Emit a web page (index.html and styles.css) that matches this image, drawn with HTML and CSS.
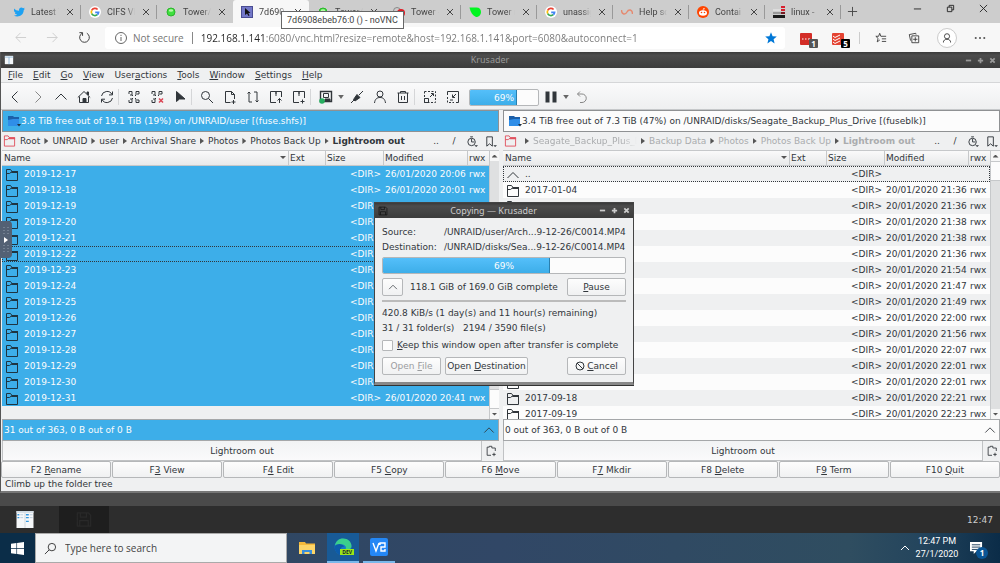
FILE: index.html
```html
<!DOCTYPE html>
<html lang="en">
<head>
    <meta charset="UTF-8">
    <meta name="viewport" content="width=device-width, initial-scale=1.0">
    <title>7d6908ebeb76:0 () - noVNC</title>
    <link rel="stylesheet" href="styles.css">
</head>
<body>

<!-- Shared icons -->
<svg class="sprite" aria-hidden="true">
    <symbol id="i-x" viewBox="0 0 10 10"><path d="M2 2l6 6M8 2l-6 6"/></symbol>
    <symbol id="i-google" viewBox="0 0 12 12"><circle cx="6" cy="6" r="6" fill="#fff" stroke="none"/><g fill="none" stroke-width="1.7"><path stroke="#ea4335" d="M2.7 4.4A3.6 3.6 0 0 1 8.6 3.5"/><path stroke="#fbbc05" d="M2.7 4.4a3.6 3.6 0 0 0 0 3.2"/><path stroke="#34a853" d="M2.7 7.6a3.6 3.6 0 0 0 5.6 1.1"/><path stroke="#4285f4" d="M8.3 8.7A3.6 3.6 0 0 0 9.6 6.3H6.2"/></g></symbol>
    <symbol id="i-green" viewBox="0 0 12 12"><circle cx="6" cy="6" r="4" fill="#3fe03f" stroke="#2bb52b"/><ellipse cx="6" cy="4.5" rx="2.2" ry="1.2" fill="#b5f7a5" stroke="none"/></symbol>
    <symbol id="i-folder" viewBox="0 0 14 12"><path d="M1.500 11.500V.5H5.500L7 2.500h5.500v9z" fill="none"/><path d="M1.500 4.500h3L7 2.500" fill="none"/><path d="M7 2h6v2H6z" fill="currentColor" stroke="none"/></symbol>
    <symbol id="i-disk" viewBox="0 0 14 12"><path d="M1 1h5l1 1h5v4H1z" fill="#1c5fa8" stroke="none"/><path d="M1 5l5-1h6v7H1z" fill="#2f8ee8" stroke="none"/><path d="M10 9h4l-2 2.500z" fill="#234" stroke="none"/></symbol>
    <symbol id="i-up" viewBox="0 0 14 12"><path d="M1.500 9L7 3.500 12.500 9" fill="none"/></symbol>
    <symbol id="i-clock" viewBox="0 0 14 14"><circle cx="6" cy="7.500" r="4"/><path d="M6 7.500V4M6 7.500h3M4.500 2h3"/><path d="M9 11h4l-2 2z" fill="currentColor" stroke="none"/></symbol>
    <symbol id="i-mark" viewBox="0 0 14 14"><path d="M3 2h6v10L6 9.500 3 12z"/><path d="M10 11h4l-2 2z" fill="currentColor" stroke="none"/></symbol>
    <symbol id="i-newtab" viewBox="0 0 14 14"><path d="M7 12H2.500V2.500H5V1.500h3v2h4V7M8.500 11h4M10.500 9v4"/></symbol>
    <symbol id="i-save" viewBox="0 0 14 14"><path d="M1.500 1.500h9l2 2v9h-11zM4 1.500V5h5V1.500M3.500 12.500V8h7v4.500"/></symbol>
</svg>

<!-- Browser tabs -->
<header class="tab-strip">
    <nav class="tabs">
        <a class="tab" href="#"><svg class="fav" viewBox="0 0 12 12"><path d="M1 2.500C2.500 4 4 4.700 6 4.700 5.700 2 8.500.700 10 2.300l1.700-.5-.8 1.500.9-.1-1.100 1.100C10.700 9.500 5 12 .8 9.500c1.500 0 2.500-.3 3.300-1C2.800 8.300 2 7.700 1.800 6.700h1C1.500 6.200 1 5.400 1 4.300z" fill="#1da1f2"/></svg><span>Latest T</span><svg class="close"><use href="#i-x"/></svg></a>
        <a class="tab" href="#"><svg class="fav"><use href="#i-google"/></svg><span>CIFS VF</span><svg class="close"><use href="#i-x"/></svg></a>
        <a class="tab plain" href="#"><svg class="fav"><use href="#i-green"/></svg><span>Tower/</span><svg class="close"><use href="#i-x"/></svg></a>
        <a class="tab active" href="#"><svg class="fav" viewBox="0 0 12 12"><rect x=".5" y=".5" width="11" height="11" fill="#7378c8" stroke="#4a4d93"/><path d="M4 2v7l2-1.500L7.500 10l1-.6L7.300 7H9.500z" fill="#111"/></svg><span>7d690</span><svg class="close"><use href="#i-x"/></svg></a>
        <a class="tab plain" href="#"><svg class="fav"><use href="#i-green"/></svg><span>Tower/</span><svg class="close"><use href="#i-x"/></svg></a>
        <a class="tab" href="#"><svg class="fav" viewBox="0 0 12 12"><circle cx="4" cy="5" r="3.500" fill="none" stroke="#888"/><circle cx="8" cy="7" r="4" fill="#e01b24"/><path d="M8 5v4" stroke="#fff"/></svg><span>Tower -</span><svg class="close"><use href="#i-x"/></svg></a>
        <a class="tab" href="#"><svg class="fav" viewBox="0 0 12 12"><path d="M.5 1.500h7c3 0 4.500 2 4.500 4.500 0 3-2.500 5-5 5C3.500 9.500 1.500 6 .5 1.500z" fill="#00f520"/></svg><span>Tower n</span><svg class="close"><use href="#i-x"/></svg></a>
        <a class="tab" href="#"><svg class="fav"><use href="#i-google"/></svg><span>unassig</span><svg class="close"><use href="#i-x"/></svg></a>
        <a class="tab" href="#"><svg class="fav" viewBox="0 0 12 12"><path d="M.5 4c0 5 4 5 5.500 2s5.500-3 5.500 2" fill="none" stroke="#e58a70" stroke-width="1.400"/></svg><span>Help sc</span><svg class="close"><use href="#i-x"/></svg></a>
        <a class="tab" href="#"><svg class="fav" viewBox="0 0 12 12"><circle cx="6" cy="6" r="6" fill="#ff4500"/><ellipse cx="6" cy="7" rx="4" ry="2.700" fill="#fff"/><circle cx="4.500" cy="6.500" r=".8" fill="#ff4500"/><circle cx="7.500" cy="6.500" r=".8" fill="#ff4500"/><path d="M6 4.500l.5-2 1.500.4" fill="none" stroke="#fff" stroke-width=".7"/></svg><span>Contai</span><svg class="close"><use href="#i-x"/></svg></a>
        <a class="tab" href="#"><svg class="fav" viewBox="0 0 12 12"><path d="M0 3h8v2H0z" fill="#ddd"/><path d="M0 6h8v2H0z" fill="#999"/><path d="M0 9h12v3H0z" fill="#1a1a1a"/><path d="M8 0h4v2H8zM8 3h4v2H8z" fill="#d8202f"/><path d="M8 6h4v2H8z" fill="#7a1a22"/></svg><span>linux -</span><svg class="close"><use href="#i-x"/></svg></a>
        <button class="new-tab" aria-label="New tab"><svg viewBox="0 0 12 12"><path d="M6 1v10M1 6h10"/></svg></button>
    </nav>
    <div class="window-buttons">
        <button aria-label="Minimize"><svg viewBox="0 0 10 10"><path d="M1 5.500h8"/></svg></button>
        <button aria-label="Restore"><svg viewBox="0 0 10 10"><path d="M1.500 3.500h5v5h-5zM3.500 3.500v-2h5v5h-2"/></svg></button>
        <button aria-label="Close"><svg viewBox="0 0 10 10"><path d="M1 1l8 8M9 1L1 9"/></svg></button>
    </div>
    <div class="tooltip">7d6908ebeb76:0 () - noVNC</div>
</header>

<!-- Address bar -->
<div class="address-row">
    <button class="nav-btn off" aria-label="Back"><svg viewBox="0 0 14 14"><path d="M13 7H2M7 2L2 7l5 5"/></svg></button>
    <button class="nav-btn off" aria-label="Forward"><svg viewBox="0 0 14 14"><path d="M1 7h11M7 2l5 5-5 5"/></svg></button>
    <button class="nav-btn" aria-label="Reload"><svg viewBox="0 0 14 14"><path d="M4.500 2.400A5.200 5.200 0 1 0 9.500 2.400M1.500 1.800h3.400v3.400"/></svg></button>
    <label class="address">
        <svg class="info" viewBox="0 0 12 12"><circle cx="6" cy="6" r="5.500"/><path d="M6 5v4M6 2.800v1.200"/></svg>
        <span class="secure">Not secure</span>
        <input type="text" value="192.168.1.141:6080/vnc.html?resize=remote&amp;host=192.168.1.141&amp;port=6080&amp;autoconnect=1">
        <svg class="star" viewBox="0 0 12 12"><path d="M6 .3l1.600 3.900 4.200.3-3.200 2.700 1 4.200L6 9.100l-3.600 2.300 1-4.200L.2 4.500l4.200-.3z"/></svg>
    </label>
    <div class="extensions">
        <button class="ext" aria-label="Passwords"><svg viewBox="0 0 12 12"><rect width="12" height="12" rx="1" fill="#d32d27"/><path d="M2 6h1.500M5 6h1.500M8 6h2" stroke="#fff"/></svg><b>1</b></button>
        <button class="ext" aria-label="Tasks"><svg viewBox="0 0 12 12"><rect width="12" height="12" rx="1" fill="#e44332"/><path d="M1 3l2 1.500L8 2M1 6l2 1.500L8 5M1 9l2 1.500L8 8" stroke="#fff" fill="none"/></svg><b class="black">5</b></button>
        <i></i>
        <button class="tool" aria-label="Favorites"><svg viewBox="0 0 14 14"><path d="M13 5H6.800L5.500 1.500 4.200 5H1l2.600 2.500-1 4 3-2.200M8 8h5M8 11h5"/></svg></button>
        <button class="tool" aria-label="Collections"><svg viewBox="0 0 14 14"><path d="M4.500 4.500h8v8h-8zM8.500 6v5M6 8.500h5M3 10L1.500 3l7.500-1.500.4 1.500"/></svg></button>
        <button class="tool avatar" aria-label="Profile"><svg viewBox="0 0 14 14"><circle cx="7" cy="5" r="3"/><path d="M2.500 12.500c.5-3 2-4 4.500-4s4 1 4.500 4"/></svg></button>
        <button class="tool" aria-label="More"><svg viewBox="0 0 14 14"><path d="M1 7h2M6 7h2M11 7h2" stroke-width="1.600"/></svg></button>
    </div>
</div>

<!-- Remote desktop -->
<main class="remote">
    <div class="title-bar">
        <svg class="app-icon" viewBox="0 0 12 12"><path d="M1 1h10v10H1z" fill="#f4f7fa"/><path d="M1 2.500h10M6 2.500V11" stroke="#8fb7d8"/></svg>
        <span>Krusader</span>
        <div class="title-btns"><button aria-label="Minimize"><svg viewBox="0 0 8 8"><path d="M1 4h6"/></svg></button><button aria-label="Maximize"><svg viewBox="0 0 8 8"><path d="M1 4h6M4 1v6"/></svg></button><button aria-label="Close"><svg viewBox="0 0 8 8"><path d="M1.500 1.500l5 5M6.500 1.500l-5 5"/></svg></button></div>
    </div>

    <nav class="menu-bar">
        <a href="#"><u>F</u>ile</a><a href="#"><u>E</u>dit</a><a href="#"><u>G</u>o</a><a href="#"><u>V</u>iew</a><a href="#">User<u>a</u>ctions</a><a href="#"><u>T</u>ools</a><a href="#"><u>W</u>indow</a><a href="#"><u>S</u>ettings</a><a href="#"><u>H</u>elp</a>
    </nav>

    <div class="tool-bar">
        <button aria-label="Back"><svg viewBox="0 0 14 14"><path d="M9.500 1.500L4 7l5.500 5.500"/></svg></button>
        <button class="dim" aria-label="Forward"><svg viewBox="0 0 14 14"><path d="M4.500 1.500L10 7l-5.500 5.500"/></svg></button>
        <button aria-label="Up"><svg viewBox="0 0 14 14"><path d="M1.500 9.500L7 4l5.500 5.500"/></svg></button>
        <button aria-label="Home"><svg viewBox="0 0 14 14"><path d="M.8 7.500L7 1.500l6.200 6M2.500 6.500v6h9v-6"/><path d="M6 8.500h3v4H6zM10 2h1.500v3L10 4z" fill="currentColor"/></svg></button>
        <button aria-label="Refresh"><svg viewBox="0 0 14 14"><path d="M1.500 6A5.600 5.600 0 0 1 12 4.500M12.500 8A5.600 5.600 0 0 1 2 9.500M12.500 1.500v3.400H9M1.500 12.500V9.200H5"/></svg></button>
        <i></i>
        <button aria-label="Select"><svg viewBox="0 0 14 14"><path d="M2 4V1.500h3V5H3M9 5V1.500h3V4h-2M2 10v2.500h3V9H3M9 9v3.500h3V10h-2M5 5l1 1M9 5L8 6M5 9l1-1M9 9L8 8"/></svg></button>
        <button aria-label="Unselect"><svg viewBox="0 0 14 14"><path d="M2 4V1.500h3V5H3M9 5V1.500h3V4h-2M2 10v2.500h3V9H3M5 5l1 1M9 5L8 6M5 9l1-1"/><path d="M9 8.500l4 4M13 8.500l-4 4" stroke="#da4453" stroke-width="1.500"/></svg></button>
        <button aria-label="Pointer"><svg viewBox="0 0 14 14"><path d="M3.500 1.500v10l3-2.500 5.500 0z" fill="currentColor"/></svg></button>
        <i></i>
        <button aria-label="Search"><svg viewBox="0 0 14 14"><circle cx="5.500" cy="5.500" r="4"/><path d="M8.500 8.500l4.500 4.500"/></svg></button>
        <button aria-label="New file"><svg viewBox="0 0 14 14"><path d="M7.500 12.500h-5v-11h6l3 3V9M8.500 1.500v3h3M8.500 12h4M10.500 10v4"/></svg></button>
        <button aria-label="Synchronize"><svg viewBox="0 0 14 14"><path d="M6 12H3V2M1.500 3.500L3 2l1.500 1.500M8 2h3v9M9.500 10.500L11 12l1.500-1.500"/></svg></button>
        <button aria-label="Unpack"><svg viewBox="0 0 14 14"><path d="M7 12.500H1.500v-11h11V7M7 1.500V6M6 3h2M10.500 13V8.500M8.500 10.500l2-2 2 2"/></svg></button>
        <button aria-label="Pack"><svg viewBox="0 0 14 14"><path d="M7 12.500H1.500v-11h11V8M7 1.500V6M6 3h2M8.500 11.500h4M10.500 9.500v4"/></svg></button>
        <i></i>
        <button aria-label="Disk"><svg viewBox="0 0 14 14"><path d="M1.500 1.500h11v10h-11z" stroke-width="1.400"/><path d="M4.500 3.500h5v4h-5z"/><path d="M6 9h5v2H6z" fill="currentColor"/><circle cx="3" cy="11" r="2.800" fill="#27ae60" stroke="none"/></svg></button>
        <button class="drop" aria-label="Disk menu"></button>
        <button aria-label="Connect"><svg viewBox="0 0 14 14"><path d="M1 13l4-4M9 5l4-4"/><path d="M3.500 9.500L7 4.500l3 3L5 11z" fill="currentColor"/></svg></button>
        <button aria-label="User"><svg viewBox="0 0 14 14"><circle cx="7" cy="4" r="3"/><path d="M1.500 13c.5-4 2.500-5.500 5.500-5.500s5 1.500 5.500 5.500"/></svg></button>
        <button aria-label="Trash"><svg viewBox="0 0 14 14"><path d="M1.500 3h11M4.500 3V1.500h5V3M2.500 3v9.500h9V3M5.500 6v4M8.500 6v4"/></svg></button>
        <i></i>
        <button aria-label="Expand"><svg viewBox="0 0 14 14"><path d="M1.500 1.500h11v11h-11z" stroke-dasharray="2 1.500"/><path d="M1.500 8.500h4v4h-4zM7 7l3-3M8 3.500h2.500V6"/></svg></button>
        <button aria-label="Shrink"><svg viewBox="0 0 14 14"><path d="M1.500 5V1.500h11v11H10"/><path d="M1.500 7v5.500H8" stroke-dasharray="2 1.500"/><path d="M10 4L7 7M6.500 4.500v3H9M4 10h3"/></svg></button>
        <div class="progress small" role="progressbar" aria-valuenow="69"><div style="width:69%"></div><span>69%</span></div>
        <button aria-label="Pause"><svg viewBox="0 0 14 14"><path d="M1.500 1.500h4v11h-4zM8.500 1.500h4v11h-4z" fill="currentColor" stroke="none"/></svg></button>
        <button class="drop" aria-label="Queue menu"></button>
        <button class="dim" aria-label="Undo"><svg viewBox="0 0 14 14"><path d="M5 1.500L2.500 4 5 6.500M2.500 4H7a4 4 0 0 1 0 8.500H5"/></svg></button>
    </div>

    <div class="panels">
        <section class="panel left">
            <div class="media"><svg><use href="#i-disk"/></svg>3.8 TiB free out of 19.1 TiB (19%) on /UNRAID/user [(fuse.shfs)]</div>
            <nav class="crumbs">
                <svg class="red"><use href="#i-folder"/></svg>
                <a href="#">Root</a><s></s><a href="#">UNRAID</a><s></s><a href="#">user</a><s></s><a href="#">Archival Share</a><s></s><a href="#">Photos</a><s></s><a href="#">Photos Back Up</a><s></s><a class="here" href="#">Lightroom out</a>
                <div class="jump"><button>..</button><button>/</button><button aria-label="History"><svg><use href="#i-clock"/></svg></button><button aria-label="Bookmarks"><svg><use href="#i-mark"/></svg></button></div>
            </nav>
            <div class="list">
                <div class="files">
                    <table>
                        <colgroup><col><col class="c-ext"><col class="c-size"><col class="c-mod"><col class="c-rwx"></colgroup>
                        <thead><tr><th class="sorted">Name</th><th>Ext</th><th>Size</th><th>Modified</th><th>rwx</th></tr></thead>
                        <tbody id="left-rows"></tbody>
                    </table>
                </div>
                <div class="scroll end"><button aria-label="Scroll up"></button><div><span></span></div><button class="down" aria-label="Scroll down"></button></div>
            </div>
            <div class="totals">31 out of 363, 0 B out of 0 B<svg><use href="#i-up"/></svg></div>
            <div class="panel-tabs"><button class="ptab">Lightroom out</button><button class="add" aria-label="New tab"><svg><use href="#i-newtab"/></svg></button></div>
        </section>

        <section class="panel right">
            <div class="media"><svg><use href="#i-disk"/></svg>3.4 TiB free out of 7.3 TiB (47%) on /UNRAID/disks/Seagate_Backup_Plus_Drive [(fuseblk)]</div>
            <nav class="crumbs">
                <svg class="red"><use href="#i-folder"/></svg>
                <s></s><a class="cut" href="#">Seagate_Backup_Plus_D</a><s></s><a href="#">Backup Data</a><s></s><a href="#">Photos</a><s></s><a href="#">Photos Back Up</a><s></s><a class="here" href="#">Lightroom out</a>
                <div class="jump"><button>..</button><button>/</button><button aria-label="History"><svg><use href="#i-clock"/></svg></button><button aria-label="Bookmarks"><svg><use href="#i-mark"/></svg></button></div>
            </nav>
            <div class="list">
                <div class="files">
                    <table>
                        <colgroup><col><col class="c-ext"><col class="c-size"><col class="c-mod"><col class="c-rwx"></colgroup>
                        <thead><tr><th class="sorted">Name</th><th>Ext</th><th>Size</th><th>Modified</th><th>rwx</th></tr></thead>
                        <tbody id="right-rows"></tbody>
                    </table>
                </div>
                <div class="scroll"><button aria-label="Scroll up"></button><div><span></span></div><button class="down" aria-label="Scroll down"></button></div>
            </div>
            <div class="totals">0 out of 363, 0 B out of 0 B<svg><use href="#i-up"/></svg></div>
            <div class="panel-tabs"><button class="ptab">Lightroom out</button><button class="add" aria-label="New tab"><svg><use href="#i-newtab"/></svg></button></div>
        </section>
    </div>

    <div class="fkeys">
        <button>F2 <u>R</u>ename</button><button>F<u>3</u> View</button><button>F<u>4</u> Edit</button><button>F5 <u>C</u>opy</button><button>F6 <u>M</u>ove</button><button>F<u>7</u> Mkdir</button><button>F8 <u>D</u>elete</button><button>F<u>9</u> Term</button><button>F10 <u>Q</u>uit</button>
    </div>
    <div class="status">Climb up the folder tree</div>

    <!-- Copy dialog -->
    <div class="dialog" role="dialog" aria-label="Copying">
        <div class="title-bar">
            <svg class="app-icon dark"><use href="#i-save"/></svg>
            <span>Copying — Krusader</span>
            <div class="title-btns"><button aria-label="Minimize"><svg viewBox="0 0 8 8"><path d="M1 4h6"/></svg></button><button aria-label="Maximize"><svg viewBox="0 0 8 8"><path d="M1 4h6M4 1v6"/></svg></button><button aria-label="Close"><svg viewBox="0 0 8 8"><path d="M1.500 1.500l5 5M6.500 1.500l-5 5"/></svg></button></div>
        </div>
        <div class="dialog-body">
            <dl>
                <dt>Source:</dt><dd>/UNRAID/user/Arch...9-12-26/C0014.MP4</dd>
                <dt>Destination:</dt><dd>/UNRAID/disks/Sea...9-12-26/C0014.MP4</dd>
            </dl>
            <div class="progress" role="progressbar" aria-valuenow="69"><div style="width:69%"></div><span>69%</span></div>
            <div class="row">
                <button class="btn expand" aria-label="Details"><svg><use href="#i-up"/></svg></button>
                <span>118.1 GiB of 169.0 GiB complete</span>
                <button class="btn side"><span><u>P</u>ause</span></button>
            </div>
            <hr>
            <p>420.8 KiB/s (1 day(s) and 11 hour(s) remaining)</p>
            <p>31 / 31 folder(s) &nbsp; 2194 / 3590 file(s)</p>
            <label class="keep"><input type="checkbox"><span><u>K</u>eep this window open after transfer is complete</span></label>
            <div class="row actions">
                <button class="btn" disabled><span>Open <u>F</u>ile</span></button>
                <button class="btn wide"><span>Open <u>D</u>estination</span></button>
                <button class="btn side"><svg viewBox="0 0 10 10"><circle cx="5" cy="5" r="4"/><path d="M2 2l6 6"/></svg><span><u>C</u>ancel</span></button>
            </div>
        </div>
    </div>

    <button class="vnc-handle" aria-label="Control bar"><svg viewBox="0 0 12 36"><path d="M4 5v9M8 5v9M4 23v9M8 23v9" stroke="#93a0ae" stroke-dasharray="1 2"/><path d="M4 15l4 3-4 3z" fill="#fff"/></svg></button>
</main>

<!-- Remote taskbar -->
<div class="dock">
    <button aria-label="Krusader"><svg viewBox="0 0 18 18"><path d="M0 0h18v18H0z" fill="#f6f8fa"/><path d="M0 0h18v2H0z" fill="#d4dde5"/><path d="M9 2v16" stroke="#d0d7dd"/><path d="M1 4h2M1 7h2M10 4h3M10 7h3M10 11h3" stroke="#3498e0" stroke-width="1.500"/><path d="M4 4h3M4 7h3M14 4h3M14 7h3" stroke="#bcd"/></svg></button>
    <button class="current" aria-label="Copying"><svg><use href="#i-save"/></svg></button>
    <time>12:47</time>
</div>

<!-- Windows taskbar -->
<footer class="taskbar">
    <button class="start" aria-label="Start"><svg viewBox="0 0 12 12"><path d="M0 1.700L5 1v4.600H0zM5.600.9L12 0v5.600H5.600zM0 6.300h5V11l-5-.7zM5.600 6.300H12V12l-6.400-.9z" fill="#fff"/></svg></button>
    <label class="search"><svg viewBox="0 0 14 14"><circle cx="8.500" cy="5.500" r="4"/><path d="M5.500 8.500L1 13"/></svg><input type="text" placeholder="Type here to search" aria-label="Search"></label>
    <button class="task" aria-label="File Explorer"><svg viewBox="0 0 18 18"><path d="M1 3h6l1 1.500h9V15H1z" fill="#f5b93b"/><path d="M1 6h16v9H1z" fill="#fdd568"/><path d="M4 15v-4h10v4h-2.500v-2h-5v2z" fill="#3a8fdc"/></svg></button>
    <button class="task edge" aria-label="Edge Dev"><svg viewBox="0 0 18 18"><circle cx="9" cy="9" r="8.500" fill="#1679c9"/><path d="M1 8C1.500 3 5 .5 9 .5c5 0 8.500 3.500 8.500 7.500 0 3-3 4-6 3.500 1.500-3-1-5-4-5C4.500 6.500 2 7 1 8z" fill="#3bcf8c"/><path d="M.6 8.500C3 5 9 5.500 10 9c-2-1-4 1-3 4l2 4.400C4 17.400.5 13.500.6 8.500z" fill="#0d5cab"/></svg><b>DEV</b></button>
    <button class="task open" aria-label="VNC Viewer"><svg viewBox="0 0 18 18"><rect width="18" height="18" rx="2" fill="#2487f5"/><path d="M3 5l3 8 3-8M10 7V5h5v4h-4v4h4v-2" fill="none" stroke="#fff" stroke-width="1.400"/></svg></button>
    <div class="tray">
        <svg class="chev" viewBox="0 0 10 10"><path d="M1 7l4-4 4 4"/></svg>
        <time>12:47 PM<br>27/1/2020</time>
        <button class="notes" aria-label="Notifications"><svg viewBox="0 0 14 14"><path d="M0 0h13v10H7l-3 3v-3H0z" fill="#fff"/><path d="M2 3h9M2 5.500h9M2 8h6" stroke="#17395a"/></svg><b>1</b></button>
    </div>
</footer>

<script>
    const leftFiles = [
        ['2019-12-17', '20:06'], ['2019-12-18', '20:01'], ['2019-12-19', '20:05'],
        ['2019-12-20', '20:08'], ['2019-12-21', '20:10'], ['2019-12-22', '20:12'],
        ['2019-12-23', '20:15'], ['2019-12-24', '20:17'], ['2019-12-25', '20:21'],
        ['2019-12-26', '20:25'], ['2019-12-27', '20:28'], ['2019-12-28', '20:30'],
        ['2019-12-29', '20:34'], ['2019-12-30', '20:38'], ['2019-12-31', '20:41']
    ];
    const rightFiles = [
        ['2017-01-04', '21:36'], ['2017-01-05', '21:36'], ['2017-01-11', '21:38'],
        ['2017-01-18', '21:38'], ['2017-02-03', '21:36'], ['2017-02-20', '21:54'],
        ['2017-03-12', '21:47'], ['2017-04-02', '21:49'], ['2017-05-14', '22:00'],
        ['2017-06-10', '21:56'], ['2017-07-22', '22:07'], ['2017-08-13', '22:01'],
        ['2017-09-10', '22:01'], ['2017-09-18', '22:21'], ['2017-09-19', '22:23']
    ];

    function row(name, modified, icon, cls) {
        return `<tr class="${cls}"><td><svg><use href="#${icon}"/></svg>${name}</td><td></td>` +
            `<td class="size">&lt;DIR&gt;</td><td>${modified}</td><td>${modified ? 'rwx' : ''}</td></tr>`;
    }

    document.getElementById('left-rows').innerHTML = leftFiles
        .map(f => row(f[0], '26/01/2020 ' + f[1], 'i-folder', f[0] === '2019-12-22' ? 'focus' : '')).join('');
    document.getElementById('right-rows').innerHTML = row('..', '', 'i-up', 'focus') + rightFiles
        .map(f => row(f[0], '20/01/2020 ' + f[1], 'i-folder', '')).join('');
</script>

</body>
</html>
```
FILE: styles.css
```css
/* Basic Reset */
* {
    margin: 0;
    padding: 0;
    box-sizing: border-box;
}

body {
    height: 100vh;
    display: flex;
    flex-direction: column;
    overflow: hidden;
    font-family: "DejaVu Sans", sans-serif;
    font-size: 9px;
    line-height: 16px;
    color: #31363b;
    background: #4a4a4a;
}

button,
input {
    font: inherit;
    color: inherit;
    background: none;
    border: none;
}

a {
    color: inherit;
    text-decoration: none;
}

svg {
    flex: none;
    fill: none;
    stroke: currentColor;
}

.sprite {
    position: absolute;
    width: 0;
    height: 0;
}

u {
    text-underline-offset: 1px;
}

/* Browser tabs */
.tab-strip {
    position: relative;
    display: flex;
    height: 23px;
    background: #cdcdcd;
    font-family: Roboto, sans-serif;
    font-size: 9px;
    color: #444;
}

.tabs {
    display: flex;
    flex: 1;
    padding-left: 5px;
}

.tab {
    position: relative;
    display: flex;
    align-items: center;
    width: 76px;
    padding: 0 6px 0 8px;
    gap: 6px;
}

.tab::after {
    content: "";
    position: absolute;
    right: 0;
    top: 5px;
    height: 14px;
    border-right: 1px solid #999;
}

.tab.plain::after,
.tab.active::after {
    display: none;
}

.tab.active {
    background: #f7f7f7;
    border-radius: 3px 3px 0 0;
}

.tab span {
    flex: 1;
    overflow: hidden;
    white-space: nowrap;
    mask-image: linear-gradient(to right, #000 70%, transparent);
}

.fav {
    width: 12px;
    height: 12px;
    stroke: none;
}

.close {
    width: 10px;
    height: 10px;
}

.new-tab {
    width: 22px;
    display: grid;
    place-items: center;
}

.new-tab svg {
    width: 11px;
    height: 11px;
}

.window-buttons {
    display: flex;
    height: 17px;
    color: #222;
}

.window-buttons button {
    width: 33px;
    display: grid;
    place-items: center;
}

.window-buttons svg {
    width: 9px;
    height: 9px;
}

.tooltip {
    position: absolute;
    left: 281px;
    top: 11px;
    z-index: 5;
    height: 18px;
    padding: 0 5px;
    white-space: nowrap;
    background: #fff;
    border: 1px solid #666;
}

/* Address bar */
.address-row {
    display: flex;
    align-items: center;
    height: 29px;
    padding: 0 4px;
    background: #f7f7f7;
    font-family: "Open Sans", sans-serif;
    font-size: 10px;
    color: #333;
}

.nav-btn {
    width: 32px;
    display: grid;
    place-items: center;
}

.nav-btn svg {
    width: 13px;
    height: 13px;
}

.nav-btn.off {
    color: #ccc;
}

.address {
    flex: 1;
    display: flex;
    align-items: center;
    height: 22px;
    margin-left: 5px;
    padding: 0 8px 0 10px;
    background: #fff;
    border-radius: 3px;
}

.address .info {
    width: 12px;
    height: 12px;
    color: #666;
}

.secure {
    margin-left: 6px;
    padding-right: 8px;
    line-height: 12px;
    color: #767676;
    border-right: 1px solid #888;
}

.address input {
    flex: 1;
    margin-left: 8px;
    outline: none;
    color: transparent;
    /* host part is darker than the rest of the URL */
    background: linear-gradient(to right, #222 63px, #777 63px);
    background-clip: text;
}

.address .star {
    width: 12px;
    height: 12px;
    fill: #0078d7;
    stroke: none;
}

.extensions {
    display: flex;
    align-items: center;
    padding-left: 6px;
}

.extensions i {
    height: 12px;
    margin: 0 4px;
    border-right: 1px solid #ccc;
}

.ext {
    position: relative;
    width: 32px;
    height: 20px;
    padding-top: 3px;
}

.ext svg {
    display: block;
    width: 12px;
    height: 12px;
    margin: 0 auto 0 9px;
    stroke: none;
}

.ext b {
    position: absolute;
    right: 5px;
    bottom: 0;
    width: 9px;
    height: 9px;
    line-height: 9px;
    font-size: 8px;
    color: #fff;
    background: #555;
    border-radius: 1px;
}

.ext b.black {
    background: #000;
}

.tool {
    width: 33px;
    display: grid;
    place-items: center;
}

.tool svg {
    width: 12px;
    height: 12px;
}

.avatar svg {
    width: 18px;
    height: 18px;
    padding: 3px;
    background: #fff;
    border-radius: 50%;
    outline: 1px solid #ccc;
}

/* Krusader window */
.remote {
    position: relative;
    flex: 1;
    min-height: 0;
    display: flex;
    flex-direction: column;
    margin-bottom: 13px;
    background: #eff0f1;
    border-left: 1px solid #555;
    border-bottom: 2px solid #777;
}

.title-bar {
    display: flex;
    align-items: center;
    justify-content: space-between;
    height: 16px;
    padding: 0 2px 0 3px;
    font-family: "Noto Sans", sans-serif;
    color: #999;
    background: linear-gradient(#3a3a3a, #4c4c4c 20%, #3c3c3c);
}

.title-bar .app-icon {
    width: 10px;
    height: 10px;
    margin-right: 2px;
    stroke: none;
}

.title-bar .app-icon.dark {
    color: #111;
    stroke: currentColor;
}

.title-btns {
    display: flex;
    gap: 2px;
}

.title-btns button {
    width: 10px;
    display: grid;
    place-items: center;
}

.title-btns svg {
    width: 7px;
    height: 7px;
    stroke-width: 2;
}

.menu-bar {
    display: flex;
    gap: 10px;
    height: 15px;
    line-height: 14px;
    padding-left: 7px;
    border-bottom: 1px solid #d5d6d8;
}

.tool-bar {
    display: flex;
    align-items: center;
    height: 27px;
    padding: 2px 0 0 2px;
    background: linear-gradient(#fafafb, #eeeff0);
    border-bottom: 1px solid #c6c8ca;
    color: #31363b;
}

.tool-bar button {
    width: 23px;
    display: grid;
    place-items: center;
}

.tool-bar svg {
    width: 14px;
    height: 14px;
}

.tool-bar .dim {
    color: #888;
}

.tool-bar > i {
    width: 4px;
    height: 16px;
    border-left: 1px solid #d5d6d8;
}

.tool-bar .drop {
    width: 8px;
    height: 4px;
    background: #666;
    clip-path: polygon(15% 0, 85% 0, 50% 100%);
}

.progress {
    position: relative;
    height: 17px;
    overflow: hidden;
    background: #fcfcfc;
    border: 1px solid #b5b7b9;
    border-radius: 2px;
}

.progress div {
    height: 100%;
    background: linear-gradient(#54bffa, #3daee9);
    border-right: 1px solid #2a7fae;
}

.progress span {
    position: absolute;
    inset: 0;
    line-height: 16px;
    text-align: center;
    color: #fcfcfc;
}

.progress.small {
    width: 70px;
    margin-left: 5px;
}

/* Panels */
.panels {
    flex: 1;
    min-height: 0;
    display: flex;
    gap: 4px;
    padding-left: 1px;
}

.panel {
    flex: 1;
    min-width: 0;
    display: flex;
    flex-direction: column;
}

.media {
    display: flex;
    align-items: center;
    height: 22px;
    padding-left: 4px;
    white-space: nowrap;
    background: #fcfcfc;
    border: 1px solid #8f9193;
}

.media svg {
    width: 14px;
    height: 12px;
}

.left .media,
.left .totals {
    color: #fcfcfc;
    background: #3daee9;
}

.crumbs {
    display: flex;
    align-items: center;
    height: 18px;
    padding-left: 1px;
    white-space: nowrap;
}

.crumbs .red {
    width: 13px;
    height: 12px;
    margin-right: 4px;
    color: #e0525f;
}

/* path separators */
.crumbs s {
    width: 4px;
    height: 6px;
    margin: 0 4px;
    background: #555;
    clip-path: polygon(0 0, 100% 50%, 0 100%);
}

.crumbs .here {
    font-weight: bold;
}

.right .crumbs a {
    color: #aaacae;
}

.crumbs .cut {
    width: 104px;
    overflow: hidden;
    mask-image: linear-gradient(to right, #000 85%, transparent);
}

.jump {
    display: flex;
    margin-left: auto;
}

.jump button {
    width: 18px;
    display: grid;
    place-items: center;
}

.jump svg {
    width: 13px;
    height: 13px;
}

.list {
    flex: 1;
    min-height: 0;
    display: flex;
    border-top: 1px solid #c6c8ca;
}

.files {
    flex: 1;
    overflow: hidden;
}

table {
    width: 100%;
    table-layout: fixed;
    border-collapse: separate;
    border-spacing: 0;
    white-space: nowrap;
}

.c-ext {
    width: 37px;
}

.c-size {
    width: 58px;
}

.c-mod {
    width: 84px;
}

.c-rwx {
    width: 22px;
}

th {
    height: 15px;
    line-height: 14px;
    padding-left: 2px;
    font-weight: normal;
    text-align: left;
    background: linear-gradient(#fafafa, #e8e9ea);
    border-bottom: 1px solid #c6c8ca;
}

th + th {
    border-left: 1px solid #c6c8ca;
    padding-left: 1px;
}

th.sorted::after {
    content: "";
    float: right;
    width: 6px;
    height: 3px;
    margin: 5px 2px 0 0;
    background: #555;
    clip-path: polygon(0 0, 100% 0, 50% 100%);
}

td {
    height: 16px;
    padding-left: 2px;
}

td:first-child {
    padding-left: 3px;
}

td svg {
    width: 14px;
    height: 12px;
    margin-right: 5px;
    vertical-align: middle;
}

td.size {
    padding-right: 2px;
    text-align: right;
}

.left td {
    color: #fcfcfc;
    background: #3daee9;
}

.left td svg {
    color: #1f3440;
}

.right tbody tr {
    background: #fcfcfc;
}

.right tbody tr:nth-child(odd) {
    background: #eff0f1;
}

tr.focus {
    outline: 1px dotted #31363b;
    outline-offset: -1px;
}

.scroll {
    display: flex;
    flex-direction: column;
    width: 10px;
    border-left: 1px solid #c6c8ca;
}

.scroll button {
    height: 10px;
    background: #f7f7f7;
}

.scroll button::before {
    content: "";
    display: block;
    width: 6px;
    height: 3px;
    margin: 0 auto;
    background: #555;
    clip-path: polygon(50% 0, 100% 100%, 0 100%);
}

.scroll .down::before {
    clip-path: polygon(0 0, 100% 0, 50% 100%);
}

.scroll div {
    flex: 1;
    display: flex;
    flex-direction: column;
    background: #dfe0e1;
}

.scroll span {
    height: 20px;
    background: #fcfcfc;
    border: solid #c6c8ca;
    border-width: 1px 0;
}

.scroll.end div {
    justify-content: flex-end;
}

.totals {
    display: flex;
    align-items: center;
    justify-content: space-between;
    height: 22px;
    padding: 0 3px 0 1px;
    background: #fcfcfc;
    border: 1px solid #a5a7a9;
}

.totals svg {
    width: 12px;
    height: 12px;
    color: #31363b;
}

.panel-tabs {
    display: flex;
    height: 20px;
}

.ptab {
    flex: 1;
    background: linear-gradient(#f2f3f4, #fafafb);
    border: 1px solid #c0c2c4;
    border-top: none;
}

.add {
    width: 17px;
    display: grid;
    place-items: center;
}

.add svg {
    width: 12px;
    height: 12px;
}

.fkeys {
    display: grid;
    grid-template-columns: repeat(9, 1fr);
    gap: 1px;
    height: 17px;
}

.fkeys button,
.btn {
    line-height: 14px;
    white-space: nowrap;
    background: linear-gradient(#fdfdfd, #f0f1f2);
    border: 1px solid #b5b7b9;
    border-radius: 2px;
}

.status {
    height: 13px;
    line-height: 13px;
    padding-left: 4px;
}

/* Copy dialog */
.dialog {
    position: absolute;
    left: 373px;
    top: 150px;
    z-index: 3;
    width: 260px;
    background: #eff0f1;
    border: 1px solid #444;
    border-bottom: 3px solid #888;
    box-shadow: 0 1px 0 #333;
}

.dialog .title-bar {
    height: 15px;
    color: #ccc;
}

.dialog-body {
    display: flex;
    flex-direction: column;
    padding: 7px;
}

dl {
    display: grid;
    grid-template-columns: 62px 1fr;
    line-height: 15px;
    white-space: nowrap;
    margin-bottom: 2px;
}

.row {
    display: flex;
    align-items: center;
    gap: 4px;
    margin-top: 4px;
}

.btn {
    display: flex;
    align-items: center;
    justify-content: center;
    gap: 2px;
    width: 59px;
    height: 18px;
}

.btn svg {
    width: 10px;
    height: 10px;
}

.btn.expand {
    width: 21px;
    margin-right: 3px;
}

.btn.wide {
    width: 83px;
}

.btn.side {
    margin-left: auto;
}

.btn:disabled {
    color: #9a9c9e;
}

hr {
    margin: 4px 0;
    border: none;
    border-top: 2px solid #bbb;
}

.dialog p {
    line-height: 15px;
}

.keep {
    display: flex;
    align-items: center;
    gap: 4px;
    margin-top: 1px;
    white-space: nowrap;
}

.keep input {
    appearance: none;
    width: 11px;
    height: 11px;
    background: #fcfcfc;
    border: 1px solid #b5b7b9;
    border-radius: 1px;
}

.vnc-handle {
    position: absolute;
    left: -1px;
    top: 169px;
    z-index: 4;
    width: 12px;
    height: 37px;
    background: #536174;
    border-radius: 0 4px 4px 0;
}

.vnc-handle svg {
    display: block;
    width: 12px;
    height: 36px;
    stroke: none;
}

/* Remote taskbar */
.dock {
    display: flex;
    align-items: center;
    height: 27px;
    padding: 0 7px 0 0;
    background: #2d2d2d;
}

.dock button {
    width: 50px;
    height: 27px;
    display: grid;
    place-items: center;
}

.dock button + button {
    margin-left: 9px;
}

.dock svg {
    width: 18px;
    height: 17px;
    stroke: none;
}

.dock .current {
    background: #1e1e1e;
    color: #292929;
}

.dock .current svg {
    stroke: currentColor;
}

.dock time {
    margin-left: auto;
    font-size: 9px;
    color: #ccc;
}

/* Windows taskbar */
.taskbar {
    display: flex;
    height: 30px;
    font-family: "Open Sans", sans-serif;
    color: #fff;
    background: linear-gradient(to right, #2e475f, #314766 50%, #2f4d60 85%, #24455d 92%, #0b2c48);
}

.start {
    width: 35px;
    display: grid;
    place-items: center;
    background: #0b2d48;
}

.start svg {
    width: 13px;
    height: 13px;
    stroke: none;
}

.search {
    display: flex;
    align-items: center;
    gap: 8px;
    width: 252px;
    padding-left: 8px;
    color: #333;
    background: #f3f4f5;
    border: 1px solid #aaa;
}

.search svg {
    width: 13px;
    height: 13px;
}

.search input {
    width: 200px;
    font-size: 10px;
    outline: none;
}

.search input::placeholder {
    color: #444;
    opacity: 1;
}

.task {
    position: relative;
    width: 32px;
    margin-left: 4px;
    display: grid;
    place-items: center;
}

.task svg {
    width: 18px;
    height: 18px;
    stroke: none;
}

.task b {
    position: absolute;
    right: 5px;
    bottom: 6px;
    padding: 0 2px;
    font-size: 5px;
    line-height: 6px;
    color: #123;
    background: #9be617;
}

.edge {
    background: #185a96;
}

.edge,
.open {
    border-bottom: 2px solid #7ab8ea;
}

.tray {
    display: flex;
    align-items: center;
    margin-left: auto;
    padding-right: 12px;
}

.tray .chev {
    width: 10px;
    height: 10px;
}

.tray time {
    width: 54px;
    font-family: Roboto, sans-serif;
    font-size: 9px;
    line-height: 13px;
    text-align: center;
}

.notes {
    position: relative;
    width: 18px;
    margin-left: 6px;
}

.notes svg {
    display: block;
    width: 13px;
    height: 13px;
    stroke: none;
}

.notes b {
    position: absolute;
    right: 0;
    top: 5px;
    width: 12px;
    height: 12px;
    font-size: 8px;
    line-height: 12px;
    background: #0a5595;
    border-radius: 50%;
}
```
